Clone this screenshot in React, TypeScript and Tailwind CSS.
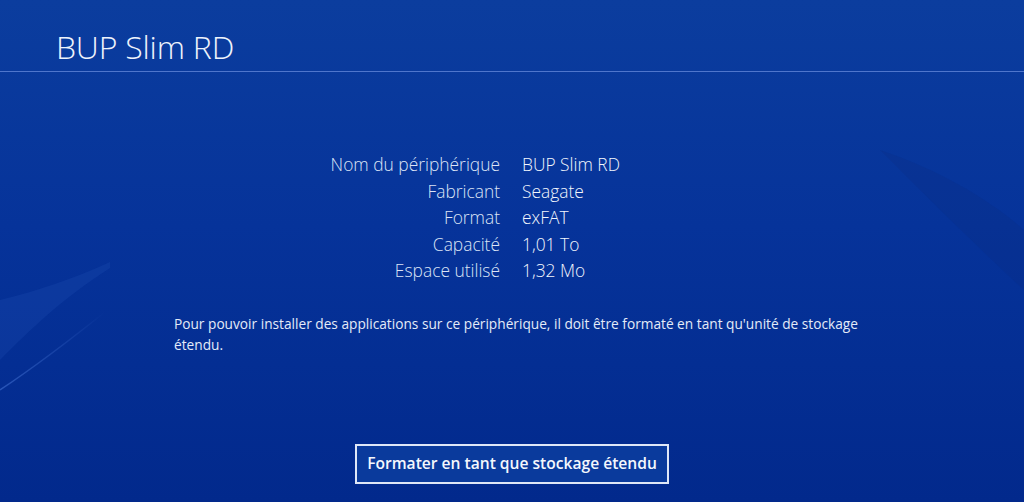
const rows = [
  { label: "Nom du périphérique", value: "BUP Slim RD" },
  { label: "Fabricant", value: "Seagate" },
  { label: "Format", value: "exFAT" },
  { label: "Capacité", value: "1,01 To" },
  { label: "Espace utilisé", value: "1,32 Mo" },
]

function Waves() {
  // faint light streaks of the console background
  return (
    <svg className="absolute inset-0 h-full w-full pointer-events-none" viewBox="0 0 1024 502" preserveAspectRatio="none">
      <defs>
        <linearGradient id="streak" x1="0" y1="0" x2="1" y2="0">
          <stop offset="0" stopColor="#6fa0ff" stopOpacity="0.35" />
          <stop offset="1" stopColor="#6fa0ff" stopOpacity="0" />
        </linearGradient>
      </defs>
      <path d="M0 300 C 40 290, 70 280, 110 262 L 110 268 C 60 300, 30 330, 0 360 Z" fill="#2a5cc0" opacity="0.2" />
      <path d="M0 390 C 30 370, 70 340, 105 312" stroke="url(#streak)" strokeWidth="1.5" fill="none" />
      <path d="M880 150 C 940 170, 990 200, 1024 230 L 1024 290 C 970 240, 930 200, 880 150 Z" fill="#0a2a80" opacity="0.25" />
    </svg>
  )
}

export default function App() {
  return (
    <div
      className="relative h-[502px] w-[1024px] overflow-hidden bg-[linear-gradient(180deg,#0b3d9e_0%,#06339a_45%,#02298c_100%)] text-white"
      style={{ fontFamily: '"Open Sans", "Noto Sans", sans-serif' }}
    >
      <Waves />
      <div className="relative">
        <header className="h-[72px] border-b border-[#4f76cc] pl-[56px] pt-[27px]">
          <h1 className="text-[32px] leading-[40px] font-light text-[#eef3fc] tracking-[-0.2px]">BUP Slim RD</h1>
        </header>
        <div className="pt-[79px]">
          <div className="grid grid-cols-[500px_1fr] text-[17.4px] leading-[26.5px] font-light">
            {rows.map((r) => (
              <div key={r.label} className="contents">
                <div className="text-right text-[#dce4f6]">{r.label}</div>
                <div className="pl-[22px] text-[#f2f6fd]">{r.value}</div>
              </div>
            ))}
          </div>
          <p className="ml-[174px] mt-[29px] w-[700px] text-[13.7px] leading-[21px] text-[#e4ebf8]">
            Pour pouvoir installer des applications sur ce périphérique, il doit être formaté en tant qu'unité de stockage étendu.
          </p>
          <div className="flex justify-center pt-[89px]">
            <button className="h-[40px] w-[314px] border-2 border-[#dfe7f7] bg-[#0a3a9c] text-[15.6px] font-semibold text-[#f4f7fd]">
              Formater en tant que stockage étendu
            </button>
          </div>
        </div>
      </div>
    </div>
  )
}
